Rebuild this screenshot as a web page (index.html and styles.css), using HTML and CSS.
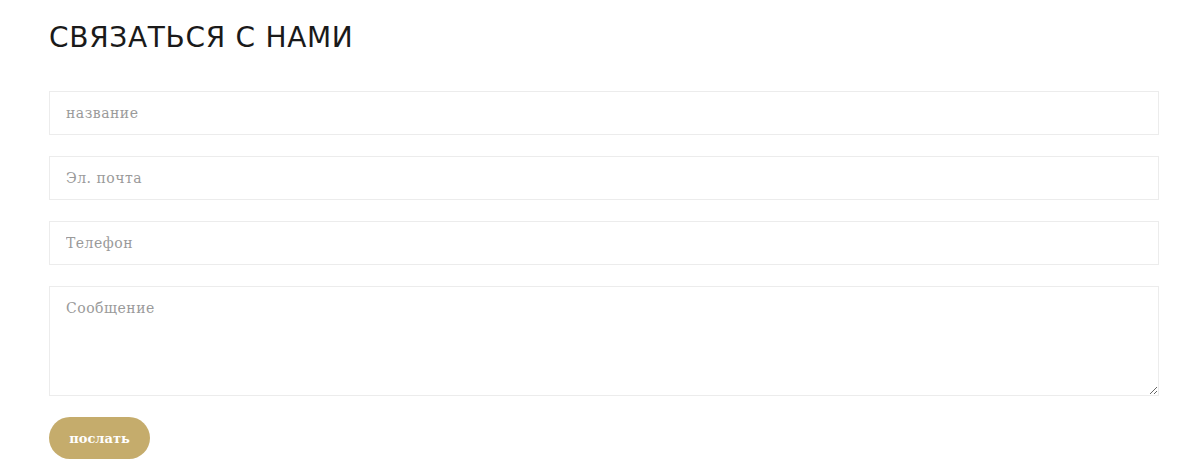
FILE: index.html
```html
<!DOCTYPE html>
<html lang="ru">
<head>
  <meta charset="UTF-8">
  <title>Связаться с нами</title>
  <link rel="stylesheet" href="styles.css">
</head>
<body>
  <div class="contact">
    <h1>СВЯЗАТЬСЯ С НАМИ</h1>
    <form class="contact-form">
      <input class="field" type="text" placeholder="название">
      <input class="field" type="email" placeholder="Эл. почта">
      <input class="field" type="tel" placeholder="Телефон">
      <textarea class="field field-message" placeholder="Сообщение"></textarea>
      <button class="btn" type="button">послать</button>
    </form>
  </div>
</body>
</html>
```

FILE: styles.css
```css
body {
  margin: 0;
  background: #fff;
  font-family: 'DejaVu Serif', serif;
}

.contact {
  width: 1110px;
  padding: 21px 0 0 49px;
}

h1 {
  font-family: 'DejaVu Sans', sans-serif;
  font-weight: normal;
  font-size: 28px;
  line-height: 33px;
  color: #1a1a1a;
  margin: 0 0 37px;
  letter-spacing: 0.7px;
}

.contact-form {
  display: flex;
  flex-direction: column;
  gap: 21px;
}

.field {
  box-sizing: border-box;
  height: 44px;
  width: 100%;
  border: 1px solid #ececec;
  padding: 0 16px;
  font-family: 'DejaVu Serif', serif;
  font-size: 14px;
  letter-spacing: 0.5px;
  color: #555;
  background: #fff;
  outline: none;
}

.field::placeholder {
  color: #9a9a9a;
}

.field-message {
  height: 110px;
  padding-top: 13px;
  resize: vertical;
}

.btn {
  align-self: flex-start;
  width: 101px;
  height: 42px;
  border: none;
  border-radius: 21px;
  background-color: #c5ac6c;
  color: #fff;
  font-family: 'DejaVu Serif', serif;
  font-weight: bold;
  font-size: 13px;
  cursor: pointer;
}
```
